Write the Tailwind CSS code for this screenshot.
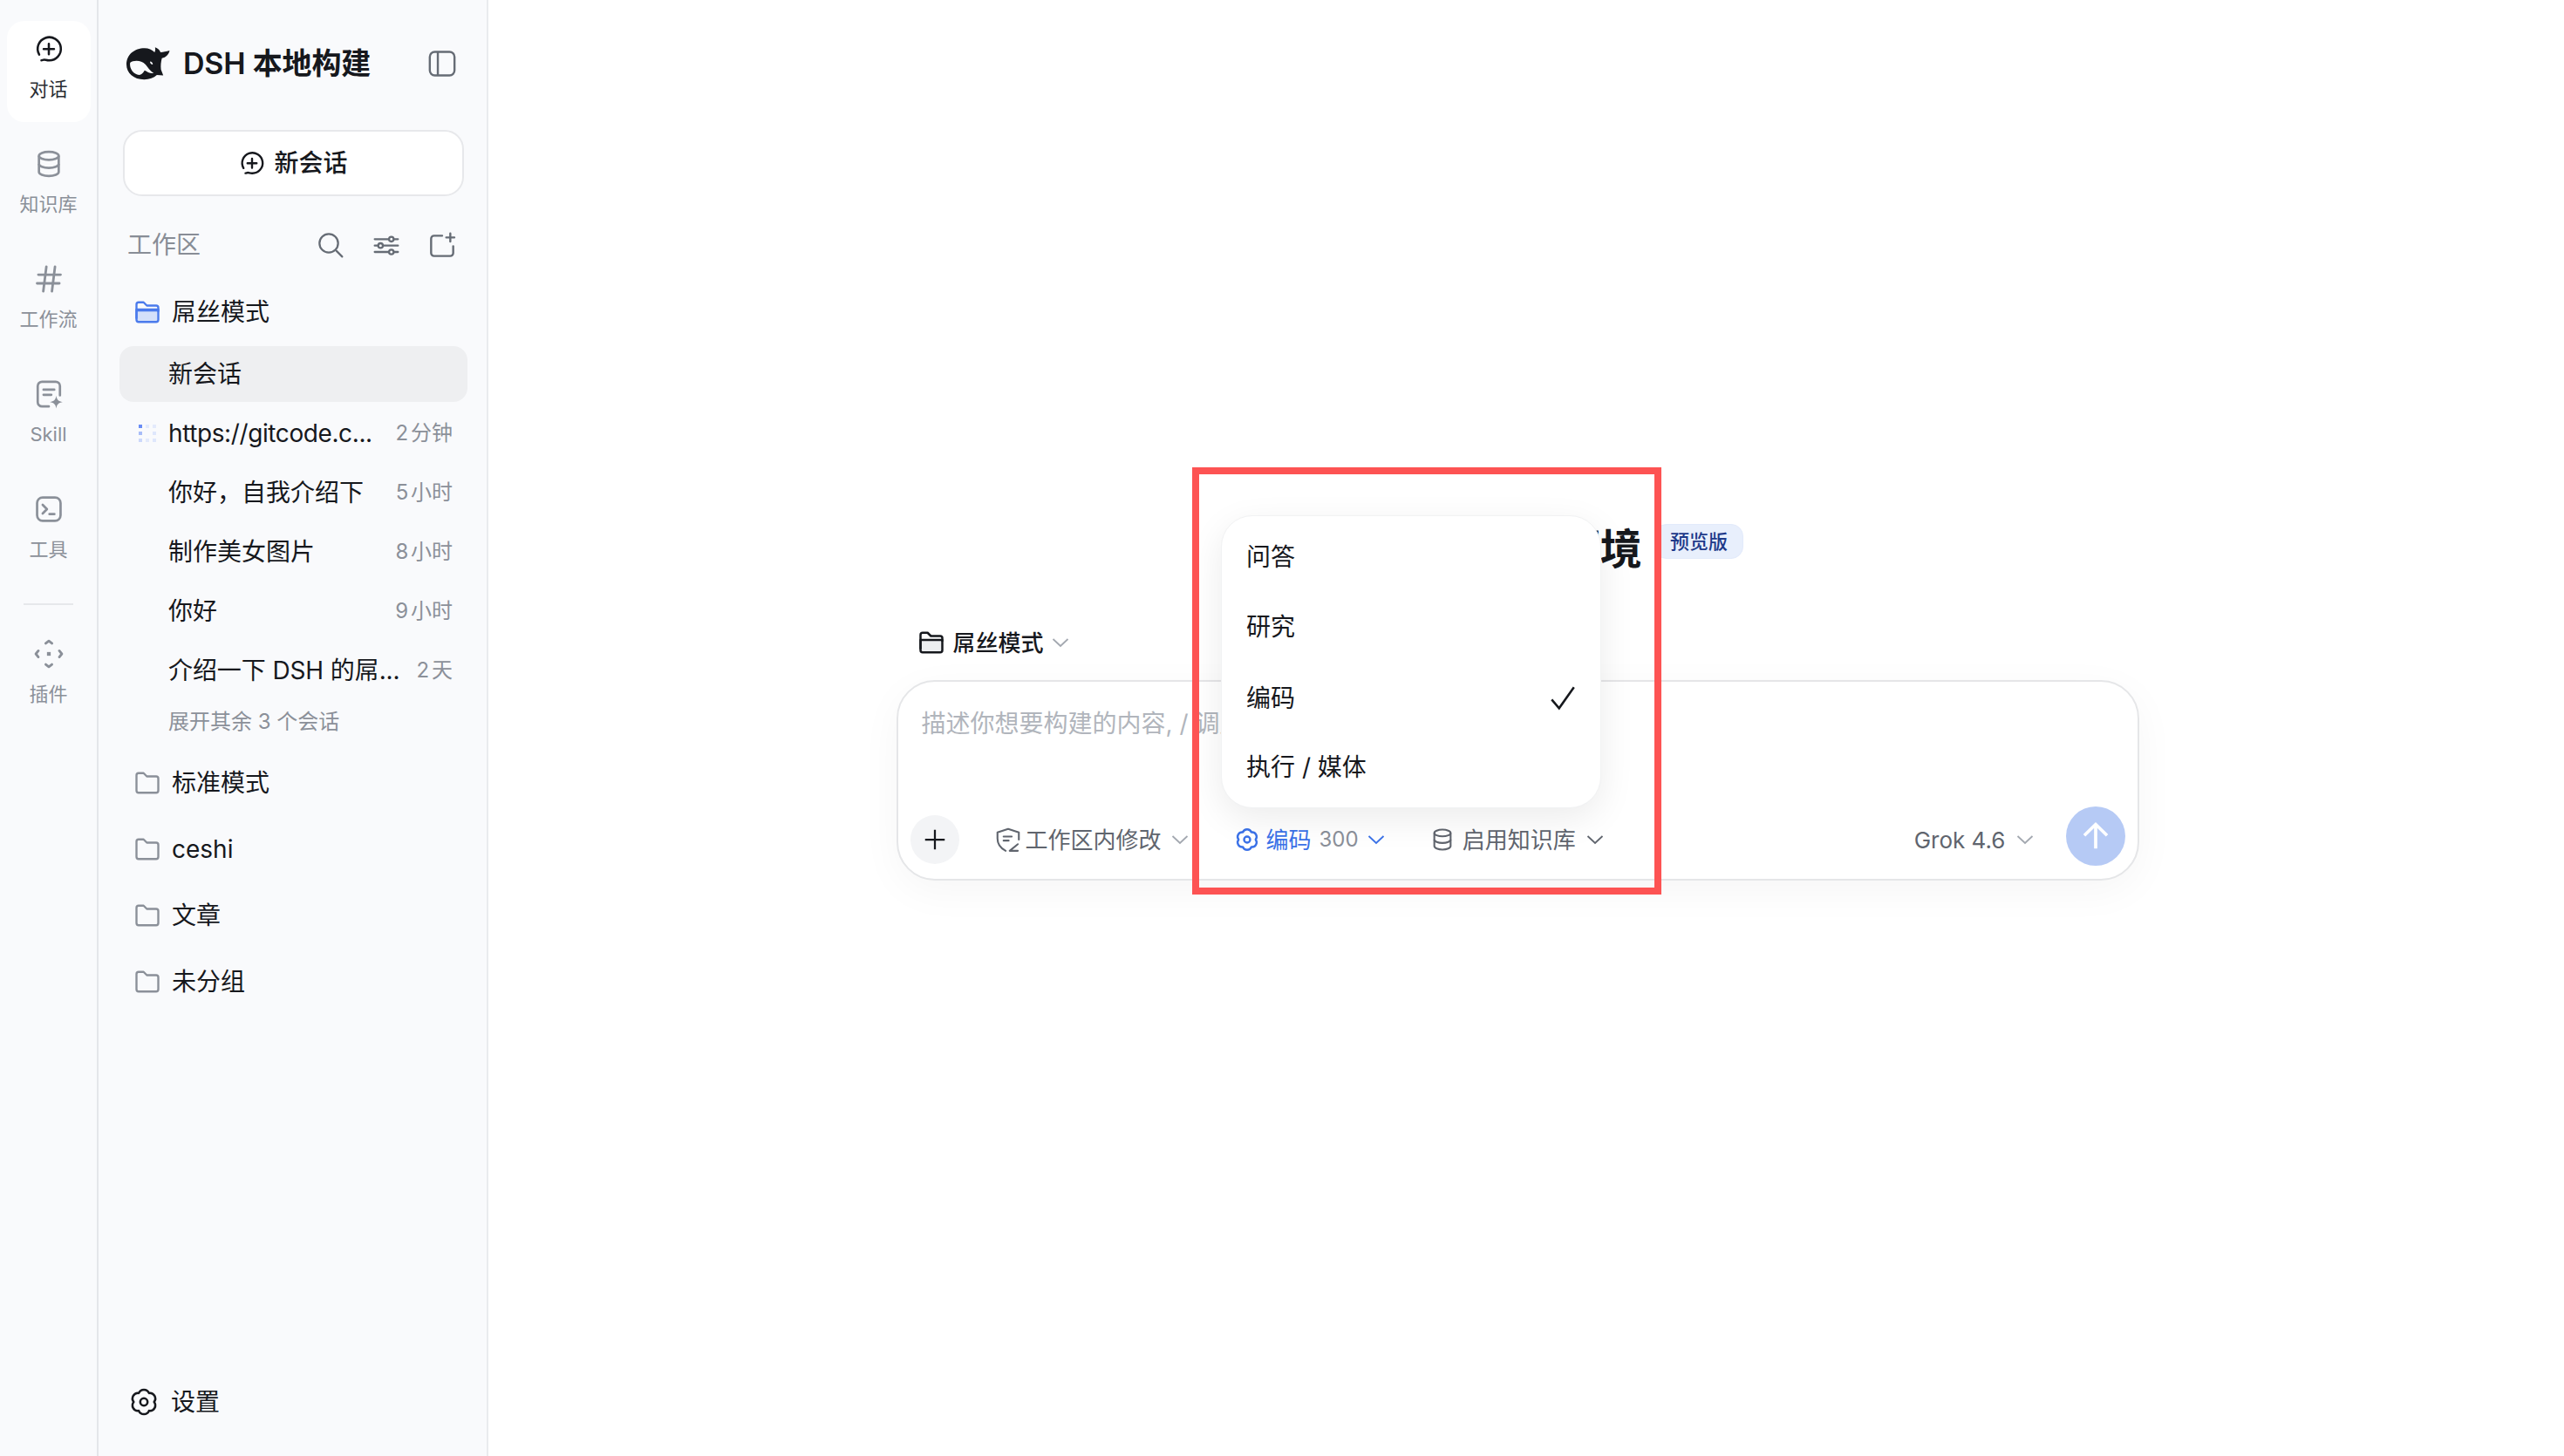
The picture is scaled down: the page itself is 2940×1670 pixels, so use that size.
<!DOCTYPE html>
<html lang="zh-CN">
<head>
<meta charset="utf-8">
<title>DSH 本地构建</title>
<script src="https://cdn.jsdelivr.net/npm/@tailwindcss/browser@4"></script>
</head>
<body class="m-0 bg-white font-[Inter,'Noto_Sans_CJK_SC',sans-serif] text-[#16181d]">
<div class="flex h-[1670px] w-[2940px] overflow-hidden">

  <!-- icon rail -->
  <nav class="flex h-full w-[113px] shrink-0 flex-col items-center gap-4 border-r-2 border-[#e4e6ea] bg-[#f9fafc] pt-6 text-[22px] text-[#8b9099]">
    <a class="flex h-[116px] w-[96px] flex-col items-center rounded-[20px] bg-white pt-[15px] text-[#2a2d33]">
      <svg class="h-[34px] w-[34px]" viewBox="0 0 24 24" fill="none" stroke="#16181d" stroke-width="1.8" stroke-linecap="round" stroke-linejoin="round"><path d="M4.2 16.7A9.4 9.4 0 1 1 12 21.4c-1.7 0-2.8-.6-3.8-.6-.9 0-1.4.5-2.2.5"/><path d="M12 8v8.4M7.8 12.2h8.4"/></svg>
      <span class="mt-[14px] leading-[30px]">对话</span>
    </a>
    <a class="flex h-[116px] w-[96px] flex-col items-center pt-[15px]">
      <svg class="h-[34px] w-[34px]" viewBox="0 0 24 24" fill="none" stroke="#8b9099" stroke-width="1.9"><ellipse cx="12" cy="5.5" rx="8" ry="3.3"/><path d="M4 5.500v13c0 1.800 3.600 3.300 8 3.300s8-1.500 8-3.300v-13"/><path d="M4 12c0 1.800 3.600 3.300 8 3.300s8-1.500 8-3.300"/></svg>
      <span class="mt-[14px] leading-[30px]">知识库</span>
    </a>
    <a class="flex h-[116px] w-[96px] flex-col items-center pt-[15px]">
      <svg class="h-[34px] w-[34px]" viewBox="0 0 24 24" fill="none" stroke="#8b9099" stroke-width="2" stroke-linecap="round"><path d="M3.500 8.500h18M2.500 15.500h18M10 2 7.500 22M17 2l-2.500 20"/></svg>
      <span class="mt-[14px] leading-[30px]">工作流</span>
    </a>
    <a class="flex h-[116px] w-[96px] flex-col items-center pt-[15px]">
      <svg class="h-[34px] w-[34px]" viewBox="0 0 24 24" fill="none" stroke="#8b9099" stroke-width="1.900" stroke-linecap="round" stroke-linejoin="round"><path d="M12 22H6.500A3.500 3.500 0 0 1 3 18.500v-13A3.500 3.500 0 0 1 6.500 2h11A3.500 3.500 0 0 1 21 5.500V13"/><path d="M7.700 8.400h8.700M7.700 12.600h6.300"/><path fill="#8b9099" stroke="none" d="M18 13.300c.5 3.400 1.800 4.700 5.200 5.200-3.400.5-4.700 1.800-5.200 5.200-.5-3.400-1.800-4.700-5.200-5.200 3.400-.5 4.700-1.800 5.200-5.200z"/></svg>
      <span class="mt-[14px] leading-[30px]">Skill</span>
    </a>
    <a class="flex h-[116px] w-[96px] flex-col items-center pt-[15px]">
      <svg class="h-[34px] w-[34px]" viewBox="0 0 24 24" fill="none" stroke="#8b9099" stroke-width="1.900" stroke-linecap="round" stroke-linejoin="round"><rect x="2.500" y="2.500" width="19" height="19" rx="4.500"/><path d="m7 8.500 3.500 3.500L7 15.500M12.500 16h4"/></svg>
      <span class="mt-[14px] leading-[30px]">工具</span>
    </a>
    <div class="my-2 h-[2px] w-[57px] shrink-0 bg-[#e6e8eb]"></div>
    <a class="flex h-[116px] w-[96px] flex-col items-center pt-[15px]">
      <svg class="h-[34px] w-[34px]" viewBox="0 0 24 24" fill="none" stroke="#8b9099" stroke-width="2" stroke-linecap="round" stroke-linejoin="round"><path d="m9.500 3.500 2.500-2 2.500 2M9.500 20.500l2.500 2 2.500-2M3.500 9.500l-2 2.500 2 2.500M20.500 9.500l2 2.500-2 2.500"/><rect x="10.500" y="10.500" width="3" height="3" fill="#8b9099" stroke="none"/></svg>
      <span class="mt-[14px] leading-[30px]">插件</span>
    </a>
  </nav>

  <!-- workspace sidebar -->
  <aside class="flex h-full w-[447px] shrink-0 flex-col border-r-2 border-[#e9ebee] bg-[#f9fafc] pl-6 pr-[22px]">
    <header class="flex h-[149px] shrink-0 items-center pb-[3px] pl-2 pr-[12px]">
      <svg class="h-[38px] w-[50px] shrink-0" viewBox="15 14 48 36"><path fill="#16181d" d="M15 33C15 22 24 15 35 15c4.500 0 8 1.500 11 4.500 .8-1.800 1-3.500 .5-5.500 3 1 5 2.700 6 5.500 3-.2 6-1.200 10-2-1 4.500-4 7.500-8.500 8.500-1 4-1.500 8-1 12.500l2.500 6.500-7-.5c-3.500 3-8 5-14 5C23 49.500 15 42.500 15 33z"/><path fill="#f9fafc" d="M19 31c3-2.500 12-3.500 17 2 2.500 3 5 7 9 9.500-4 .8-7-1.500-10-3-2 3-3.500 5-6 5-6-.5-11-7-10-13.500z"/><path fill="#f9fafc" d="M41 29.500c1.500 0 3 1.300 3 3.500-1.800 0-3.200-1.500-3-3.500z"/></svg>
      <span class="ml-[15px] text-[34px] font-semibold leading-none tracking-[-0.2px] whitespace-nowrap">DSH 本地构建</span>
      <svg class="ml-auto h-[34px] w-[34px] shrink-0" viewBox="0 0 24 24" fill="none" stroke="#666c75" stroke-width="1.700"><rect x="2" y="2.500" width="20" height="19" rx="4"/><path d="M8.500 2.500v19"/></svg>
    </header>
    <button class="ml-1 mr-[4px] flex h-[76px] shrink-0 items-center justify-center gap-[10px] rounded-[22px] border-2 border-[#e7e8eb] bg-white text-[28px] font-medium">
      <svg class="h-[30px] w-[30px]" viewBox="0 0 24 24" fill="none" stroke="#16181d" stroke-width="1.900" stroke-linecap="round" stroke-linejoin="round"><path d="M4.200 16.700A9.400 9.400 0 1 1 12 21.400c-1.700 0-2.800-.6-3.800-.6-.9 0-1.400.5-2.200.5"/><path d="M12 8v8.400M7.800 12.200h8.400"/></svg>
      新会话
    </button>
    <div class="mt-[26px] flex h-[60px] shrink-0 items-center pl-[9px] pr-[13px] text-[28px] text-[#888d96]">
      <span>工作区</span>
      <svg class="ml-auto h-[32px] w-[32px]" viewBox="0 0 24 24" fill="none" stroke="#666c75" stroke-width="1.700" stroke-linecap="round"><circle cx="10.500" cy="10.500" r="8"/><path d="m17 17 5 5"/></svg>
      <svg class="ml-8 h-[32px] w-[32px]" viewBox="0 0 24 24" fill="none" stroke="#666c75" stroke-width="1.700" stroke-linecap="round"><path d="M2 7h12M18.500 7H22M2 12.500h3M9 12.500h13M2 18h12M18.500 18H22"/><circle cx="16.300" cy="7" r="2"/><circle cx="7" cy="12.500" r="2"/><circle cx="16.300" cy="18" r="2"/></svg>
      <svg class="ml-8 h-[32px] w-[32px]" viewBox="0 0 24 24" fill="none" stroke="#666c75" stroke-width="1.800" stroke-linecap="round" stroke-linejoin="round"><path d="M12 4H5a2.500 2.500 0 0 0-2.500 2.500V19A2.500 2.500 0 0 0 5 21.500h14a2.500 2.500 0 0 0 2.500-2.500v-6"/><path d="M19 2v7M15.500 5.500h7"/></svg>
    </div>

    <div class="mt-[15px] flex h-[64px] shrink-0 items-center gap-[13px] pl-[17px] text-[28px]">
      <svg class="h-[30px] w-[30px] shrink-0" viewBox="0 0 24 24" fill="none" stroke="#4b7bec" stroke-width="1.900" stroke-linejoin="round"><path fill="#d4e0fa" d="M2 19V9.500h20V19a2 2 0 0 1-2 2H4a2 2 0 0 1-2-2z"/><path d="M2 18V5a2 2 0 0 1 2-2h4.500l3 3H20a2 2 0 0 1 2 2v3.500"/><path d="M2 10.500h20"/></svg>
      屌丝模式
    </div>

    <div class="mt-[7px] flex shrink-0 flex-col gap-1 text-[28px]">
      <div class="flex h-[64px] items-center rounded-2xl bg-[#eeeff1] pl-14 pr-[17px]">新会话</div>
      <div class="flex h-[64px] items-center pl-[22px] pr-[17px]">
        <span class="mr-[14px] grid w-5 shrink-0 grid-cols-3 gap-1">
          <i class="h-1 w-1 bg-[#6a8df5]"></i><i class="h-1 w-1 bg-[#e3eafc]"></i><i class="h-1 w-1 bg-[#e3eafc]"></i>
          <i class="h-1 w-1 bg-[#a8bdf8]"></i><i class="h-1 w-1 bg-transparent"></i><i class="h-1 w-1 bg-[#dfe7fc]"></i>
          <i class="h-1 w-1 bg-[#ccd8fb]"></i><i class="h-1 w-1 bg-[#e3eafc]"></i><i class="h-1 w-1 bg-[#dfe7fc]"></i>
        </span>
        <span class="whitespace-nowrap tracking-[-0.4px]">https://gitcode.c...</span>
        <span class="ml-auto text-[24px] text-[#8b9099] [word-spacing:-4px]">2 分钟</span>
      </div>
      <div class="flex h-[64px] items-center pl-14 pr-[17px]"><span>你好，自我介绍下</span><span class="ml-auto text-[24px] text-[#8b9099] [word-spacing:-4px]">5 小时</span></div>
      <div class="flex h-[64px] items-center pl-14 pr-[17px]"><span>制作美女图片</span><span class="ml-auto text-[24px] text-[#8b9099] [word-spacing:-4px]">8 小时</span></div>
      <div class="flex h-[64px] items-center pl-14 pr-[17px]"><span>你好</span><span class="ml-auto text-[24px] text-[#8b9099] [word-spacing:-4px]">9 小时</span></div>
      <div class="flex h-[64px] items-center pl-14 pr-[17px]"><span class="whitespace-nowrap tracking-[-0.1px]">介绍一下 DSH 的屌...</span><span class="ml-auto text-[24px] text-[#8b9099] [word-spacing:-4px]">2 天</span></div>
    </div>
    <div class="flex h-[54px] shrink-0 items-center pl-14 text-[24px] text-[#8b9099]">展开其余 3 个会话</div>

    <div class="mt-[5px] flex shrink-0 flex-col text-[28px]">
      <div class="flex h-[76px] items-center gap-[13px] pl-[17px]"><svg class="h-[30px] w-[30px] shrink-0" viewBox="0 0 24 24" fill="none" stroke="#8b9099" stroke-width="1.900" stroke-linejoin="round"><path d="M2 19V5a2 2 0 0 1 2-2h4.500l3 3H20a2 2 0 0 1 2 2v11a2 2 0 0 1-2 2H4a2 2 0 0 1-2-2z"/></svg>标准模式</div>
      <div class="flex h-[76px] items-center gap-[13px] pl-[17px]"><svg class="h-[30px] w-[30px] shrink-0" viewBox="0 0 24 24" fill="none" stroke="#8b9099" stroke-width="1.900" stroke-linejoin="round"><path d="M2 19V5a2 2 0 0 1 2-2h4.500l3 3H20a2 2 0 0 1 2 2v11a2 2 0 0 1-2 2H4a2 2 0 0 1-2-2z"/></svg>ceshi</div>
      <div class="flex h-[76px] items-center gap-[13px] pl-[17px]"><svg class="h-[30px] w-[30px] shrink-0" viewBox="0 0 24 24" fill="none" stroke="#8b9099" stroke-width="1.900" stroke-linejoin="round"><path d="M2 19V5a2 2 0 0 1 2-2h4.500l3 3H20a2 2 0 0 1 2 2v11a2 2 0 0 1-2 2H4a2 2 0 0 1-2-2z"/></svg>文章</div>
      <div class="flex h-[76px] items-center gap-[13px] pl-[17px]"><svg class="h-[30px] w-[30px] shrink-0" viewBox="0 0 24 24" fill="none" stroke="#8b9099" stroke-width="1.900" stroke-linejoin="round"><path d="M2 19V5a2 2 0 0 1 2-2h4.500l3 3H20a2 2 0 0 1 2 2v11a2 2 0 0 1-2 2H4a2 2 0 0 1-2-2z"/></svg>未分组</div>
    </div>

    <div class="mt-auto mb-[30px] flex h-[64px] shrink-0 items-center gap-[13px] pl-[10px] text-[28px]">
      <svg class="h-[36px] w-[36px] shrink-0" viewBox="0 0 24 24" fill="none" stroke="#16181d" stroke-width="1.700" stroke-linejoin="round"><path d="M8.100 5.250A4.200 4.200 0 0 1 15.900 5.250 4.200 4.200 0 0 1 19.800 12 4.200 4.200 0 0 1 15.900 18.750 4.200 4.200 0 0 1 8.100 18.750 4.200 4.200 0 0 1 4.200 12 4.200 4.200 0 0 1 8.100 5.250z"/><circle cx="12" cy="12" r="2.800"/></svg>
      设置
    </div>
  </aside>

  <!-- main -->
  <main class="relative flex h-full flex-1 flex-col items-center bg-white pr-5 pt-[598px]">
    <div class="flex h-[64px] items-center">
      <h1 class="text-[48px] font-semibold leading-none whitespace-nowrap">DSH 本地构建环境</h1>
      <span class="ml-[14px] flex h-[40px] -translate-y-[9px] items-center rounded-[14px] border border-[#e2eafb] bg-[#e8effc] px-[17px] text-[22px] font-medium text-[#1e3a8a]">预览版</span>
    </div>
    <div class="mt-[55px] flex h-10 w-[1425px] items-center pl-[25px] text-[26px] font-medium">
      <svg class="h-[30px] w-[30px]" viewBox="0 0 24 24" fill="none" stroke="#16181d" stroke-width="2" stroke-linejoin="round"><path fill="#eceef0" d="M2 19v-9.500h20V19a2 2 0 0 1-2 2H4a2 2 0 0 1-2-2z"/><path d="M2 18V5a2 2 0 0 1 2-2h4.500l3 3H20a2 2 0 0 1 2 2v3"/></svg>
      <span class="ml-[10px]">屌丝模式</span>
      <svg class="ml-[7px] h-[24px] w-[24px]" viewBox="0 0 24 24" fill="none" stroke="#a3a8b0" stroke-width="1.800"><path d="m3.500 8 8.500 8 8.500-8"/></svg>
    </div>
    <div class="mt-[23px] flex h-[230px] w-[1425px] flex-col rounded-[44px] border-2 border-[#e5e6e8] bg-white shadow-[0_12px_48px_rgba(0,0,0,0.04)]">
      <p class="pl-[27px] pt-[28px] text-[28px] leading-[40px] text-[#b1b5bc] whitespace-nowrap">描述你想要构建的内容, / 调用技能</p>
      <div class="mt-auto mb-[11px] flex items-center pl-[14px] pr-[14px] text-[26px] text-[#60656e]">
        <span class="flex h-[56px] w-[56px] items-center justify-center rounded-full bg-[#f3f4f6]">
          <svg class="h-[30px] w-[30px]" viewBox="0 0 24 24" fill="none" stroke="#16181d" stroke-width="1.800"><path d="M12 3v18M3 12h18"/></svg>
        </span>
        <svg class="ml-[42px] h-[28px] w-[28px]" viewBox="0 0 24 24" fill="none" stroke="#60656e" stroke-width="1.800" stroke-linecap="round" stroke-linejoin="round"><path d="M22.500 12V5L12 1.500 1.500 5v6c0 5 3 9.500 8 12"/><path d="M7.500 9h8M7.500 13h5M21.500 16.500l-8 6.500h8"/></svg>
        <span class="ml-[6px]">工作区内修改</span>
        <svg class="ml-[9px] h-[24px] w-[24px]" viewBox="0 0 24 24" fill="none" stroke="#a3a8b0" stroke-width="1.800"><path d="m3.500 8 8.500 8 8.500-8"/></svg>
        <svg class="ml-[50px] h-[30px] w-[30px]" viewBox="0 0 24 24" fill="none" stroke="#3b72e8" stroke-width="1.900" stroke-linejoin="round"><path d="M8.100 5.250A4.200 4.200 0 0 1 15.900 5.250 4.200 4.200 0 0 1 19.800 12 4.200 4.200 0 0 1 15.900 18.750 4.200 4.200 0 0 1 8.100 18.750 4.200 4.200 0 0 1 4.200 12 4.200 4.200 0 0 1 8.100 5.250z"/><circle cx="12" cy="12" r="2.800"/></svg>
        <span class="ml-[7px] text-[#3b72e8]">编码</span>
        <span class="ml-[9px] text-[24px] text-[#8b9099]">300</span>
        <svg class="ml-[8px] h-[24px] w-[24px]" viewBox="0 0 24 24" fill="none" stroke="#3b72e8" stroke-width="1.800"><path d="m3.500 8 8.500 8 8.500-8"/></svg>
        <svg class="ml-[50px] h-[28px] w-[28px]" viewBox="0 0 24 24" fill="none" stroke="#60656e" stroke-width="1.800"><ellipse cx="12" cy="5.500" rx="8" ry="3.300"/><path d="M4 5.500v13c0 1.800 3.600 3.300 8 3.300s8-1.500 8-3.300v-13"/><path d="M4 12c0 1.800 3.600 3.300 8 3.300s8-1.500 8-3.300"/></svg>
        <span class="ml-[9px]">启用知识库</span>
        <svg class="ml-[10px] h-[24px] w-[24px]" viewBox="0 0 24 24" fill="none" stroke="#60656e" stroke-width="1.800"><path d="m3.500 8 8.500 8 8.500-8"/></svg>
        <span class="ml-auto">Grok 4.6</span>
        <svg class="ml-[10px] h-[24px] w-[24px]" viewBox="0 0 24 24" fill="none" stroke="#a3a8b0" stroke-width="1.800"><path d="m3.500 8 8.500 8 8.500-8"/></svg>
        <span class="ml-[35px] flex h-[68px] w-[68px] -translate-y-[4px] items-center justify-center rounded-full bg-[#b6caf5]">
          <svg class="h-[34px] w-[34px]" viewBox="0 0 24 24" fill="none" stroke="#ffffff" stroke-width="2.600"><path d="M12 22V3M2.800 11.500 12 2.500l9.200 9"/></svg>
        </span>
      </div>
    </div>

    <!-- mode menu -->
    <ul class="absolute left-[840px] top-[591px] flex h-[336px] w-[436px] flex-col justify-between rounded-[36px] border border-[#f1f2f3] bg-white pb-[26px] pl-[28px] pr-[26px] pt-[27px] text-[28px] shadow-[0_12px_40px_rgba(0,0,0,0.08)]">
      <li class="flex h-10 items-center">问答</li>
      <li class="flex h-10 items-center">研究</li>
      <li class="flex h-10 translate-y-[1px] items-center justify-between">编码
        <svg class="h-[34px] w-[34px]" viewBox="0 0 24 24" fill="none" stroke="#16181d" stroke-width="1.800"><path d="m3 13 6 7L21 3"/></svg>
      </li>
      <li class="flex h-10 items-center">执行 / 媒体</li>
    </ul>

    <!-- annotation frame -->
    <div class="pointer-events-none absolute left-[807px] top-[536px] h-[490px] w-[538px] border-8 border-[#fd5353]"></div>
  </main>
</div>
</body>
</html>
